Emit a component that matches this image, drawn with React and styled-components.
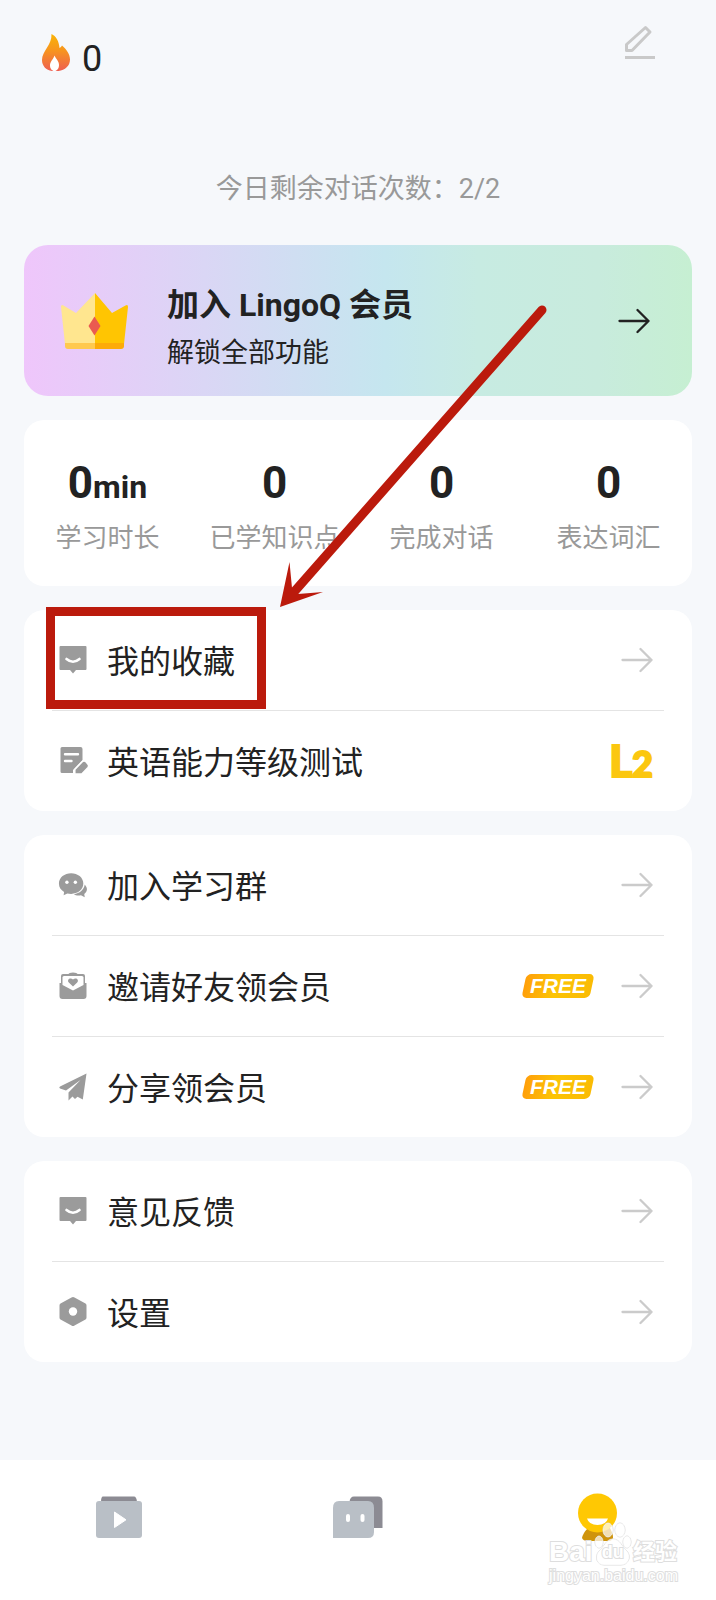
import React from "react";
import styled, { createGlobalStyle } from "styled-components";

const sans = `Roboto, "Noto Sans CJK SC", sans-serif`;

const GlobalStyle = createGlobalStyle`
  *, *::before, *::after { box-sizing: border-box; }
  body {
    margin: 0;
    background: #f6f8fb;
    color: #222;
    font-family: ${sans};
  }
  a { color: inherit; text-decoration: none; }
  svg { display: block; flex: none; }
`;

const Page = styled.div`
  position: relative;
  display: flex;
  flex-direction: column;
  min-height: 100vh;
`;

const Header = styled.header`
  display: flex;
  justify-content: space-between;
  align-items: flex-start;
  padding: 24px 60px 0 40px;
`;

const Streak = styled.div`
  display: flex;
  align-items: baseline;
  gap: 12px;
  padding-top: 10px;
  font-size: 36px;
  line-height: 44px;
`;

const IconButton = styled.button`
  padding: 0;
  border: 0;
  background: none;
  cursor: pointer;
`;

const Quota = styled.p`
  margin: 90px 0 38px;
  color: #999;
  font-size: 27px;
  line-height: 36px;
  text-align: center;
`;

const Content = styled.main`
  display: flex;
  flex-direction: column;
  gap: 24px;
  padding: 0 24px 24px;
`;

const Banner = styled.a`
  display: flex;
  align-items: center;
  padding: 21px 42px 21px 36px;
  border-radius: 24px;
  background: linear-gradient(90deg, #efc6fb, #c5e6ef 54%, #c7ebe2 68%, #c8ebdd 86%, #c6efd2);
`;

const BannerText = styled.div`
  flex: 1;
  margin-left: 38px;
  padding-top: 14px;
`;

const BannerTitle = styled.h2`
  margin: 0;
  font-size: 32px;
  font-weight: 700;
  line-height: 51px;
`;

const BannerSub = styled.p`
  margin: 0;
  font-size: 27px;
  line-height: 44px;
`;

const Stats = styled.dl`
  display: grid;
  grid-template-columns: repeat(4, 1fr);
  margin: 0;
  padding: 34px 0 26px;
  border-radius: 20px;
  background: #fff;
  text-align: center;
`;

const Stat = styled.div`
  display: flex;
  flex-direction: column-reverse;
  gap: 4px;
`;

const StatLabel = styled.dt`
  color: #999;
  font-size: 26px;
  line-height: 44px;
  white-space: nowrap;
`;

const StatValue = styled.dd`
  margin: 0;
  font-size: 44px;
  font-weight: 700;
  line-height: 58px;
`;

const Unit = styled.span`
  font-size: 32px;
  line-height: 32px;
`;

const Menu = styled.ul`
  margin: 0;
  padding: 0 28px;
  border-radius: 20px;
  background: #fff;
  list-style: none;
`;

const MenuItem = styled.li`
  position: relative;
  & + & { border-top: 1px solid #e4e4e4; }
`;

const MenuLink = styled.a`
  display: flex;
  align-items: center;
  height: 100px;
  padding: 0 11px 0 6px;
`;

const MenuLabel = styled.span`
  flex: 1;
  margin-left: 19px;
  padding-top: 4px;
  font-size: 32px;
  line-height: 48px;
`;

const FreeBadge = styled.span`
  position: relative;
  z-index: 0;
  width: 72px;
  margin-right: 27px;
  color: #fff;
  font: italic 700 21px/24px "Liberation Sans", sans-serif;
  text-align: center;
  &::before {
    content: "";
    position: absolute;
    inset: 0 2px;
    z-index: -1;
    border-radius: 5px;
    background: linear-gradient(90deg, #ff9f0a, #fcc405 45%, #fabb04);
    transform: skewX(-12deg);
  }
`;

const Level = styled.span`
  display: flex;
  align-items: baseline;
  color: #fbc70f;
  font-family: Lato, sans-serif;
  font-size: 44px;
  font-weight: 900;
  line-height: 48px;
  -webkit-text-stroke: 2px #fbc70f;
`;

const LevelDigit = styled.span`
  font-size: 36px;
`;

const Highlight = styled.div`
  position: absolute;
  top: -3px;
  left: -6px;
  width: 220px;
  height: 102px;
  border: 9px solid #bb1a0c;
  pointer-events: none;
`;

const Pointer = styled.svg`
  position: absolute;
  top: 300px;
  left: 270px;
  pointer-events: none;
`;

const TabBar = styled.nav`
  display: grid;
  grid-template-columns: repeat(3, 1fr);
  justify-items: center;
  margin-top: auto;
  padding: 30px 0 58px;
  background: #fff;
`;

const Watermark = styled.div`
  position: absolute;
  z-index: 0;
  right: 38px;
  bottom: 14px;
  color: #fff;
  font-family: "Liberation Sans", "Noto Sans CJK SC", sans-serif;
  font-weight: 700;
  white-space: nowrap;
  -webkit-text-stroke: 2px #dedede;
  paint-order: stroke fill;
  pointer-events: none;
`;

const WatermarkBrand = styled.div`
  display: flex;
  align-items: center;
  justify-content: space-between;
  width: 128px;
  font-size: 28px;
  line-height: 28px;
`;

const WatermarkName = styled.span`
  font-size: 22px;
`;

const Paw = styled.span`
  position: relative;
  display: block;
  width: 34px;
  height: 28px;
  font-size: 18px;
  text-align: center;
  svg { position: absolute; left: -2px; bottom: 0; z-index: -1; }
`;

const WatermarkSite = styled.div`
  font-size: 16px;
  font-weight: 400;
  line-height: 20px;
  text-align: center;
`;

const Flame = () => (
  <svg width="30" height="37" viewBox="0 0 30 37" aria-hidden="true">
    <defs>
      <linearGradient id="flame" x1="0" y1="0" x2="0" y2="1">
        <stop offset="0" stopColor="#f9b406" />
        <stop offset="0.45" stopColor="#f7941f" />
        <stop offset="1" stopColor="#ee5f52" />
      </linearGradient>
    </defs>
    <path fill="url(#flame)" d="M11.500 0C16 2 19 7 19.500 14C20.500 13.500 21.500 12.500 22 11.500C26.500 15.500 30 20 30 25.500C30 32 25 36 18.500 37H12C6 36 2 32 2 26C2 17 12 11 11.500 0Z" />
    <path fill="#fff" d="M14.500 21.500C16 25 19 27 19 31C19 34.500 17 37 14.500 37C12 37 10 34.500 10 31.500C10 27.500 13.500 25 14.500 21.500Z" />
  </svg>
);

const Pen = () => (
  <svg width="32" height="36" viewBox="0 0 32 36" fill="none" stroke="#c9c9c9" strokeWidth="3" aria-hidden="true">
    <path strokeLinejoin="round" d="M2.500 26.500V20.500L21.500 3.500L26 8L8 26.500Z" />
    <path d="M1 33.500H31" />
  </svg>
);

const Crown = () => (
  <svg width="69" height="58" viewBox="0 0 69 58" aria-hidden="true">
    <path fill="#ffe68f" d="M35 1V52H5L1 15Q1 12 3.500 13.500L16 21Z" />
    <path fill="#ffc502" d="M35 1V52H64L68 15Q68 12 65.500 13.500L52 21Z" />
    <path fill="#ffc94f" d="M5 51H35V57H8Q5 57 5 54Z" />
    <path fill="#fdab08" d="M35 51H64V54Q64 57 61 57H35Z" />
    <path fill="#ea5a50" d="M34.500 24.500L40.500 34L34.500 43.500L28.500 34Z" />
  </svg>
);

const Arrow = ({ color = "#cbcbcb" }) => (
  <svg width="32" height="26" viewBox="0 0 32 26" fill="none" stroke={color} strokeWidth="2.300" strokeLinecap="round" strokeLinejoin="round" aria-hidden="true">
    <path d="M1.500 13H30.500M19.500 2L30.500 13L19.500 24" />
  </svg>
);

const MenuSvg = (props) => (
  <svg width="30" height="30" viewBox="-1 0 30 30" fill="#9b9b9b" aria-hidden="true" {...props} />
);

const BubbleIcon = () => (
  <MenuSvg>
    <path d="M1.500 1H26.500Q27.500 1 27.500 2V24Q27.500 25 26.500 25H17L14 28.500L11 25H1.500Q.5 25 .5 24V2Q.5 1 1.500 1Z" />
    <path d="M7.500 14Q14 19.500 20.500 14" fill="none" stroke="#fff" strokeWidth="2.600" strokeLinecap="round" />
  </MenuSvg>
);

const TestIcon = () => (
  <MenuSvg viewBox="-1 0 30 30">
    <path d="M3 1H21.500Q23.500 1 23.500 3V14L14 24V27H3Q1.500 27 1.500 25.500V2.500Q1.500 1 3 1Z" />
    <path d="M6 8.300H19M6 15H12.500" stroke="#fff" strokeWidth="2.400" strokeLinecap="round" />
    <path stroke="#fff" strokeWidth="1.500" d="M15.800 28V23.500L23.500 15.500Q25.500 14 27.200 16L29.200 18.500Q30 20 29 21.500L22.800 28Z" />
  </MenuSvg>
);

const GroupIcon = () => (
  <MenuSvg viewBox="-1 0 32 30">
    <path d="M13 2.500C20 2.500 26 7 26 13.500C26 20 20 24.500 13 24.500C11.500 24.500 10.500 24.300 9 24L5 26L5.500 22.500C2 20.500 0 17.500 0 13.500C0 7 6 2.500 13 2.500Z" />
    <path d="M27.500 14.500C31 18.500 30.500 22 27 24.500L27.500 28L23.500 26C20 26.500 17.500 26 16 24.800C22 24 27 20 27.500 14.500Z" />
    <circle cx="8.500" cy="12" r="1.800" fill="#fff" />
    <circle cx="17.500" cy="12" r="1.800" fill="#fff" />
  </MenuSvg>
);

const InviteIcon = () => (
  <MenuSvg>
    <path d="M9 3.500Q10 1.500 14 1.500Q18 1.500 19 3.500Z" />
    <path d="M4 3H24Q26 3 26 5V12H27.500V25Q27.500 28 24.500 28H3.500Q.5 28 .5 25V12H2V5Q2 3 4 3Z" />
    <path fill="#fff" d="M5 5H23Q24.500 5 24.500 6.500V14L14 19.500L3.500 14V6.500Q3.500 5 5 5Z" />
    <path d="M14 15.500L9.800 11.500C7.500 9 11 5.800 14 8.500C17 5.800 20.500 9 18.200 11.500Z" />
  </MenuSvg>
);

const PlaneIcon = () => (
  <MenuSvg>
    <path d="M27.500 1.500L23.800 27.500L18.500 24.800L16 27L13.500 24.500L9.500 28.500V20.500L21.500 8L7 18.500L1 16.500Q-.5 15.500 1 14.500Z" />
  </MenuSvg>
);

const SettingsIcon = () => (
  <MenuSvg>
    <path d="M12.500 .5Q14 -.3 15.500 .5L26.500 6.500Q27.500 7 27.500 8.500V20.500Q27.500 22 26.500 22.500L15.500 28.500Q14 29.500 12.500 28.500L1.500 22.500Q.5 22 .5 20.500V8.500Q.5 7 1.500 6.500Z" />
    <circle cx="14" cy="14.500" r="4.200" fill="#fff" />
  </MenuSvg>
);

const TabSvg = (props) => <svg width="52" height="52" viewBox="0 0 52 52" aria-hidden="true" {...props} />;

const LessonsIcon = () => (
  <TabSvg>
    <path fill="#8c8b93" d="M10 6.500H41Q43.500 6.500 44 12H8Q8 6.500 10 6.500Z" />
    <rect x="3" y="11" width="46" height="37" rx="3" fill="#b9bfc6" />
    <path fill="#fff" stroke="#fff" strokeLinejoin="round" d="M21.500 22V37.500L33 29.800Z" />
  </TabSvg>
);

const ChatIcon = () => (
  <TabSvg>
    <path fill="#8c8b93" d="M22 6.500H46Q50.500 6.500 50.500 11.500V38H36L17.500 12Q18 6.500 22 6.500Z" />
    <path fill="#b9bfc6" d="M7 11H36Q42 11 42 18V42Q42 48 36 48H1V18Q1 11 7 11Z" />
    <rect x="14" y="24" width="4" height="8" rx="2" fill="#fff" />
    <rect x="28.500" y="24" width="4" height="8" rx="2" fill="#fff" />
  </TabSvg>
);

const ProfileIcon = () => (
  <TabSvg>
    <path fill="#cf940c" d="M17 38H39Q42.500 45 42 48Q41 51 37 51H17Q12 51 11 48Q12 43 17 38Z" />
    <circle cx="26.500" cy="23" r="19.500" fill="#ffc803" />
    <path fill="#fff" d="M16 28.500H37Q35 35 26.500 35Q18 35 16 28.500Z" />
  </TabSvg>
);

const stats = [
  { label: "学习时长", value: "0", unit: "min" },
  { label: "已学知识点", value: "0" },
  { label: "完成对话", value: "0" },
  { label: "表达词汇", value: "0" },
];

const menus = [
  [
    { label: "我的收藏", Icon: BubbleIcon, highlighted: true },
    { label: "英语能力等级测试", Icon: TestIcon, level: "2" },
  ],
  [
    { label: "加入学习群", Icon: GroupIcon },
    { label: "邀请好友领会员", Icon: InviteIcon, free: true },
    { label: "分享领会员", Icon: PlaneIcon, free: true },
  ],
  [
    { label: "意见反馈", Icon: BubbleIcon },
    { label: "设置", Icon: SettingsIcon },
  ],
];

export default function App() {
  return (
    <Page>
      <GlobalStyle />
      <Header>
        <Streak>
          <Flame />
          <span>0</span>
        </Streak>
        <IconButton type="button" aria-label="编辑">
          <Pen />
        </IconButton>
      </Header>
      <Quota>今日剩余对话次数：2/2</Quota>
      <Content>
        <Banner href="#member">
          <Crown />
          <BannerText>
            <BannerTitle>加入 LingoQ 会员</BannerTitle>
            <BannerSub>解锁全部功能</BannerSub>
          </BannerText>
          <Arrow color="#222" />
        </Banner>
        <Stats>
          {stats.map(({ label, value, unit }) => (
            <Stat key={label}>
              <StatLabel>{label}</StatLabel>
              <StatValue>
                {value}
                {unit && <Unit>{unit}</Unit>}
              </StatValue>
            </Stat>
          ))}
        </Stats>
        {menus.map((items) => (
          <Menu key={items[0].label}>
            {items.map(({ label, Icon, free, level, highlighted }) => (
              <MenuItem key={label}>
                <MenuLink href="#menu">
                  <Icon />
                  <MenuLabel>{label}</MenuLabel>
                  {free && <FreeBadge>FREE</FreeBadge>}
                  {level ? (
                    <Level>
                      L<LevelDigit>{level}</LevelDigit>
                    </Level>
                  ) : (
                    <Arrow />
                  )}
                </MenuLink>
                {highlighted && <Highlight />}
              </MenuItem>
            ))}
          </Menu>
        ))}
      </Content>
      <TabBar>
        <a href="#lessons" aria-label="课程"><LessonsIcon /></a>
        <a href="#chat" aria-label="对话"><ChatIcon /></a>
        <a href="#me" aria-label="我的"><ProfileIcon /></a>
      </TabBar>
      <Pointer width="290" height="310" viewBox="270 300 290 310" aria-hidden="true">
        <path d="M542 310L294 592" stroke="#bb1a0c" strokeWidth="9" strokeLinecap="round" />
        <path fill="#bb1a0c" d="M280 607L289.500 562L292 588L298 594L323 592Z" />
      </Pointer>
      <Watermark>
        <WatermarkBrand>
          <span>Bai</span>
          <Paw>
            <svg width="38" height="44" viewBox="0 0 38 44" fill="#fff" fillOpacity="0.7" stroke="#dcdcdc" strokeWidth="1">
              <ellipse cx="14" cy="8" rx="5" ry="7" />
              <ellipse cx="26" cy="8" rx="5" ry="7" />
              <ellipse cx="5" cy="20" rx="4" ry="6" />
              <ellipse cx="33" cy="20" rx="4" ry="6" />
              <path d="M19 17C26 17 28 25 33 29C38 35 34 43 27 43H10C3 43 0 35 5 29C10 25 12 17 19 17Z" />
            </svg>
            du
          </Paw>
          <WatermarkName>经验</WatermarkName>
        </WatermarkBrand>
        <WatermarkSite>jingyan.baidu.com</WatermarkSite>
      </Watermark>
    </Page>
  );
}
